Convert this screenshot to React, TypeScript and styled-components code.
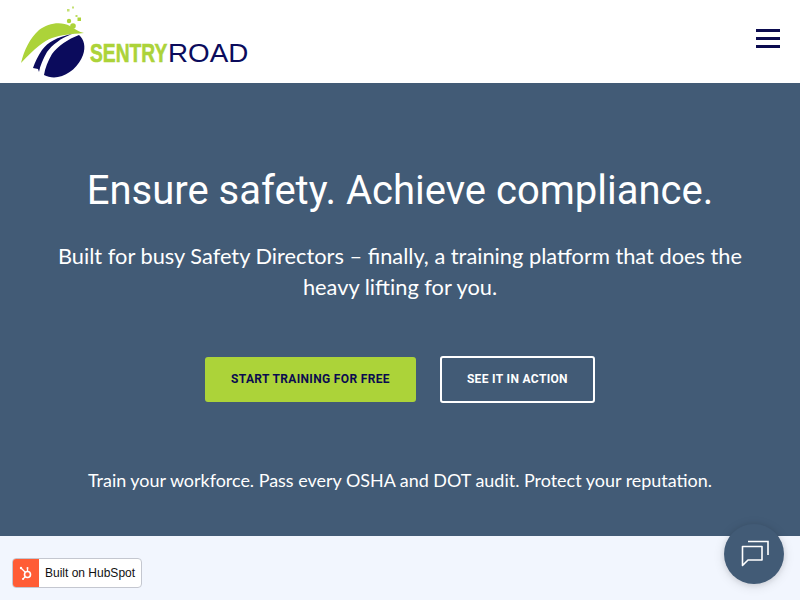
import React from "react";
import styled, { createGlobalStyle } from "styled-components";

const GlobalStyle = createGlobalStyle`
  html, body {
    margin: 0;
    padding: 0;
    background: #f2f6fe;
    overflow: hidden;
  }
`;

const Page = styled.div`
  width: 800px;
  height: 600px;
  display: flex;
  flex-direction: column;
`;

const Header = styled.header`
  height: 83px;
  background: #fff;
  display: flex;
  align-items: center;
  justify-content: space-between;
  padding: 0 20px 0 18px;
  box-sizing: border-box;
`;

const Burger = styled.button`
  width: 24px;
  height: 19px;
  padding: 0;
  border: 0;
  background: none;
  display: flex;
  flex-direction: column;
  justify-content: space-between;
  margin-bottom: 6px;
`;

const BurgerLine = styled.span`
  display: block;
  height: 3px;
  background: #0b0b4f;
`;

const Hero = styled.section`
  height: 453px;
  background: #425b76;
  color: #fff;
  display: flex;
  flex-direction: column;
  align-items: center;
  text-align: center;
  box-sizing: border-box;
  padding-top: 83px;
`;

const Title = styled.h1`
  margin: 0;
  font-family: Roboto, sans-serif;
  font-weight: 400;
  font-size: 40px;
  line-height: 50px;
`;

const Lead = styled.p`
  margin: 24px 0 0;
  width: 700px;
  font-family: Lato, sans-serif;
  font-size: 21.8px;
  line-height: 31px;
`;

const Actions = styled.div`
  margin-top: 54px;
  display: flex;
  align-items: center;
  gap: 24px;
`;

const Button = styled.a<{ $outline?: boolean }>`
  height: ${(p) => (p.$outline ? "47px" : "45px")};
  box-sizing: border-box;
  display: flex;
  align-items: center;
  justify-content: center;
  font-family: Roboto, sans-serif;
  font-weight: 700;
  font-size: 12px;
  letter-spacing: 0.34px;
  padding: 0 ${(p) => (p.$outline ? "25px" : "26px")} 2px;
  border-radius: 3px;
  color: ${(p) => (p.$outline ? "#fff" : "#0b0b4f")};
  background: ${(p) => (p.$outline ? "transparent" : "#acd339")};
  border: ${(p) => (p.$outline ? "2px solid #fff" : "0")};
`;

const Tagline = styled.p`
  margin: 64px 0 0;
  font-family: Lato, sans-serif;
  font-size: 17.95px;
  line-height: 27px;
`;

const Badge = styled.a`
  position: fixed;
  left: 12px;
  top: 558px;
  width: 130px;
  height: 30px;
  box-sizing: border-box;
  display: flex;
  align-items: center;
  background: #fff;
  border: 1px solid #c4c7d0;
  border-radius: 4px;
  overflow: hidden;
  font-family: "Liberation Sans", Arial, sans-serif;
  font-size: 12px;
  color: #111;
`;

const BadgeMark = styled.span`
  width: 26px;
  height: 100%;
  background: #ff5c35;
  display: flex;
  align-items: center;
  justify-content: center;
  margin-right: 6px;
  flex: none;
`;

const Chat = styled.button`
  position: fixed;
  left: 724px;
  top: 524px;
  width: 60px;
  height: 60px;
  padding: 0;
  border: 0;
  border-radius: 50%;
  background: #425b76;
  box-shadow: 0 1px 6px rgba(0, 0, 0, 0.1), 0 2px 12px rgba(0, 0, 0, 0.12);
  display: flex;
  align-items: center;
  justify-content: center;
`;

const Logo = () => (
  <svg width="232" height="76" viewBox="18 4 232 76">
    <g transform="translate(1 0)">
      <g fill="#acd339">
        <rect x="66" y="9" width="2.5" height="2.5" opacity=".7" />
        <rect x="71" y="6.5" width="2" height="2" opacity=".7" />
        <rect x="74.5" y="15" width="2" height="2" opacity=".8" />
        <rect x="76.5" y="17.5" width="3.5" height="3.5" />
        <circle cx="68" cy="21" r="2.2" />
        <circle cx="72" cy="26" r="2.8" />
        <path d="M20 63 C23 50 29 38 38 30 C47 23 60 21 69 26 C74 29 78 32 83 33 C70 34 60 35 51 38 C43 41 34 48 20 63Z" />
      </g>
      <g fill="#0b0b5c">
        <path d="M78 35 C83 39 85 47 82 55 C78 66 68 75 57 77 C52 78 47 77 43 75 C44 68 47 61 51 54 C57 46 67 39 78 35Z" />
        <path d="M71 34 C56 37 47 42 41 50 C37 56 34 62 32 68 L37 69 L38 72 C39 66 42 59 46 52 C51 45 60 38 71 34Z" />
      </g>
    </g>
    <g fontFamily="'Liberation Sans', Arial, sans-serif" fontSize="26">
      <text transform="translate(90 62) scale(.74 1)" fontWeight="700" fill="#acd339" stroke="#acd339" strokeWidth=".6">
        SENTRY
      </text>
      <text transform="translate(168 62) scale(1.07 1)" fill="#0b0b5c">
        ROAD
      </text>
    </g>
  </svg>
);

const SprocketIcon = () => (
  <svg width="16" height="16" viewBox="0 0 16 16" fill="none" stroke="#fff">
    <circle cx="9.5" cy="9.5" r="3" strokeWidth="1.6" />
    <path d="M7.3 7.3 L3 3 M9.5 6.5 V3.5 M7.2 11.8 L5 14" strokeWidth="1.3" />
    <circle cx="3" cy="3" r="1.2" fill="#fff" stroke="none" />
    <circle cx="9.5" cy="3" r="1" fill="#fff" stroke="none" />
    <circle cx="5" cy="14" r="1" fill="#fff" stroke="none" />
  </svg>
);

const ChatIcon = () => (
  <svg width="30" height="30" viewBox="0 0 30 30" fill="none" stroke="#fff" strokeWidth="1.6">
    <path d="M9 2.5 H29 V16" />
    <path d="M3.5 7.5 H23 V21 H9 L3.5 26.5 Z" strokeLinejoin="round" />
  </svg>
);

export default function App() {
  return (
    <Page>
      <GlobalStyle />
      <Header>
        <Logo />
        <Burger aria-label="Menu">
          <BurgerLine />
          <BurgerLine />
          <BurgerLine />
        </Burger>
      </Header>
      <Hero>
        <Title>Ensure safety. Achieve compliance.</Title>
        <Lead>Built for busy Safety Directors – finally, a training platform that does the heavy lifting for you.</Lead>
        <Actions>
          <Button>START TRAINING FOR FREE</Button>
          <Button $outline>SEE IT IN ACTION</Button>
        </Actions>
        <Tagline>Train your workforce. Pass every OSHA and DOT audit. Protect your reputation.</Tagline>
      </Hero>
      <Badge>
        <BadgeMark>
          <SprocketIcon />
        </BadgeMark>
        Built on HubSpot
      </Badge>
      <Chat aria-label="Chat">
        <ChatIcon />
      </Chat>
    </Page>
  );
}
